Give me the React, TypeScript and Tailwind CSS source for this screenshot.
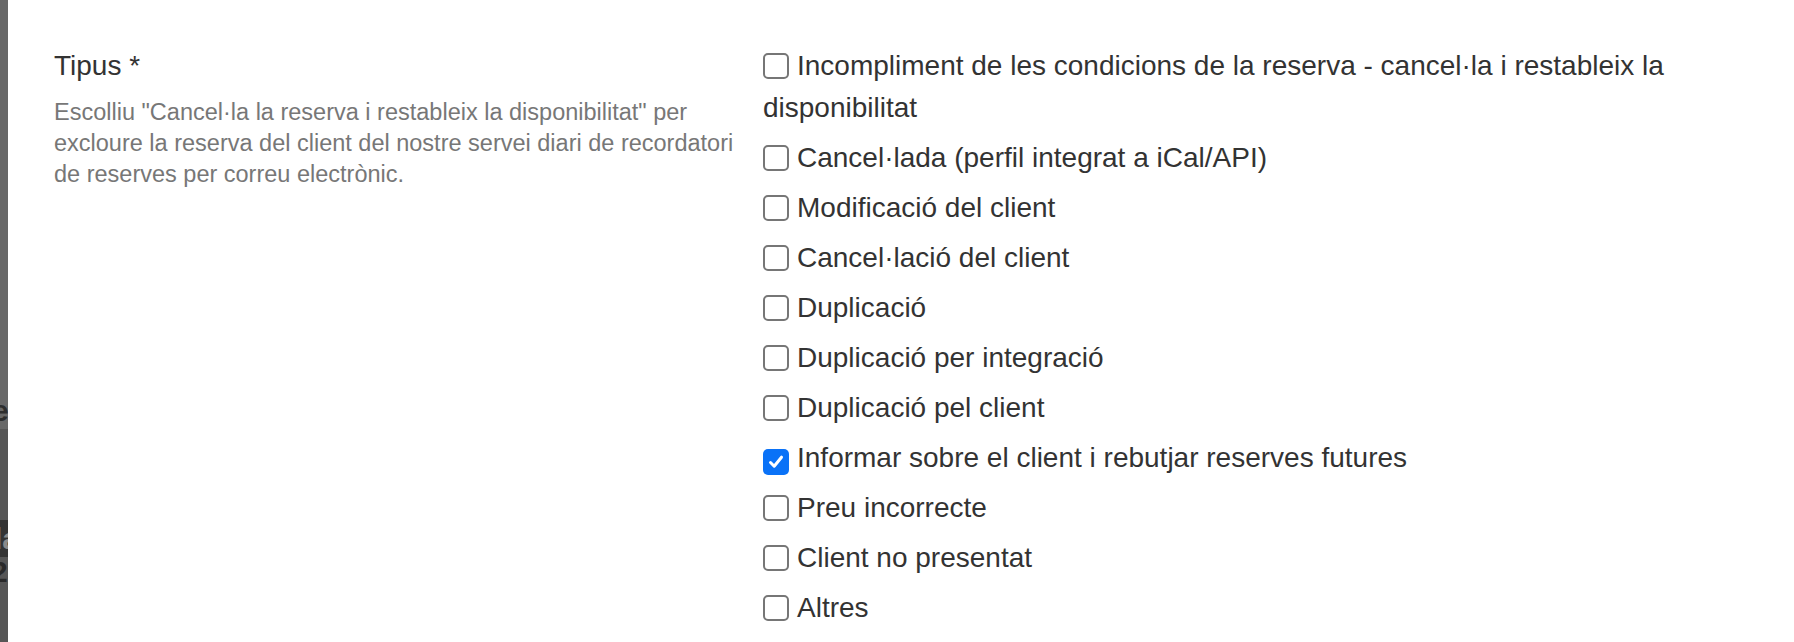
import React from "react";

const items: { label: string; checked?: boolean }[] = [
  { label: "Incompliment de les condicions de la reserva - cancel·la i restableix la disponibilitat" },
  { label: "Cancel·lada (perfil integrat a iCal/API)" },
  { label: "Modificació del client" },
  { label: "Cancel·lació del client" },
  { label: "Duplicació" },
  { label: "Duplicació per integració" },
  { label: "Duplicació pel client" },
  { label: "Informar sobre el client i rebutjar reserves futures", checked: true },
  { label: "Preu incorrecte" },
  { label: "Client no presentat" },
  { label: "Altres" },
];

function Box({ checked }: { checked?: boolean }) {
  if (checked) {
    return (
      <span className="mr-[8px] inline-flex h-[26px] w-[26px] items-center justify-center rounded-[5px] bg-[#0a72f7] align-[-4px]">
        <svg width="18" height="18" viewBox="0 0 18 18" fill="none">
          <path d="M3.5 9.5 L7.2 13.2 L14.5 4.2" stroke="white" strokeWidth="3" strokeLinecap="round" strokeLinejoin="round" />
        </svg>
      </span>
    );
  }
  return <span className="mr-[8px] inline-block h-[26px] w-[26px] rounded-[5px] border-2 border-[#767676] bg-white align-[-4px]" />;
}

export default function App() {
  return (
    <div className="flex h-[642px] w-[1794px] overflow-hidden bg-white" style={{ fontFamily: '"Liberation Sans", Arial, sans-serif' }}>
      <div className="flex w-[8px] shrink-0 flex-col overflow-hidden text-[30px] font-bold leading-none" aria-hidden="true">
        <div className="h-[393px] bg-[#686868]" />
        <div className="flex h-[36px] items-center overflow-hidden bg-[#686868] text-[#2e2e2e]">
          <span className="-ml-[8px]">e</span>
        </div>
        <div className="h-[91px] bg-[#565656]" />
        <div className="flex h-[37px] items-center overflow-hidden bg-[#343434] text-[#8a8a8a]">
          <span className="-ml-[6px]">la</span>
        </div>
        <div className="flex h-[30px] items-center overflow-hidden bg-[#565656] text-[#2a2a2a]">
          <span className="-ml-[9px]">2</span>
        </div>
        <div className="flex-1 bg-[#565656]" />
      </div>
      <div className="flex flex-1 pl-[46px] pt-[45px]">
        <div className="w-[709px] shrink-0 pr-[16px]">
          <div className="text-[28px] leading-[42px] text-[#333333]">Tipus *</div>
          <p className="mt-[10px] text-[23.5px] leading-[31px] text-[#777777]">
            Escolliu "Cancel·la la reserva i restableix la disponibilitat" per excloure la reserva del client del nostre servei diari de recordatori de reserves per correu electrònic.
          </p>
        </div>
        <div className="flex w-[950px] flex-col gap-[8px]">
          {items.map((it) => (
            <label key={it.label} className="block text-[28px] leading-[42px] text-[#333333]">
              <Box checked={it.checked} />
              {it.label}
            </label>
          ))}
        </div>
      </div>
    </div>
  );
}
